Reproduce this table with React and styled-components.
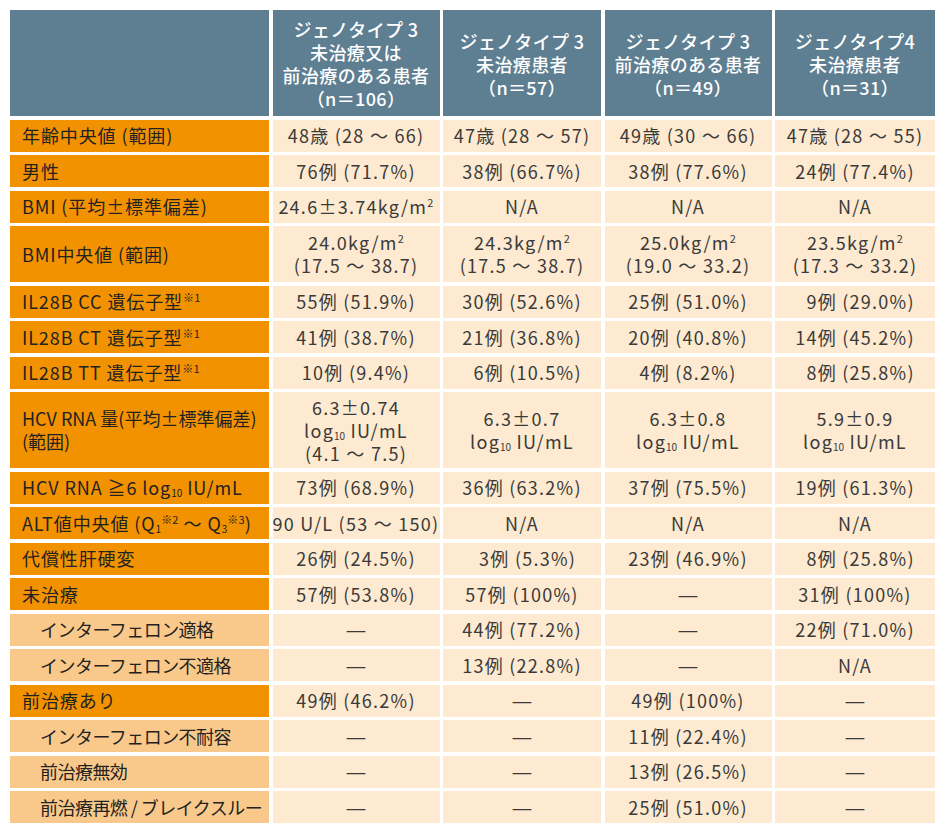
import React from 'react';
import styled, { createGlobalStyle } from 'styled-components';

const GlobalStyle = createGlobalStyle`
  html, body {
    margin: 0;
    padding: 0;
    background: #fff;
  }
  body {
    font-family: "Noto Sans CJK JP", "Noto Sans", sans-serif;
    color: #333;
  }
`;

const Page = styled.div`
  padding: 10px;
  width: 945px;
  box-sizing: border-box;
`;

const Table = styled.div`
  display: grid;
  grid-template-columns: 259px 167px 158px 167px 160px;
  grid-template-rows: ${(p) => p.$rows};
  column-gap: 3.5px;
  row-gap: 3.5px;
  font-size: 18px;
  line-height: 23px;
  letter-spacing: 0.02em;
`;

const Corner = styled.div`
  background: #5e7e91;
`;

const HeadCell = styled.div`
  background: #5e7e91;
  color: #fff;
  font-weight: 500;
  display: flex;
  flex-direction: column;
  align-items: center;
  justify-content: center;
  text-align: center;
  padding-top: 2px;
`;

const LabelCell = styled.div`
  background: ${(p) => (p.$sub ? '#f9c98b' : '#f39200')};
  color: #222;
  display: flex;
  align-items: center;
  padding-left: ${(p) => (p.$sub ? '30px' : '12px')};
  letter-spacing: ${(p) => (p.$sub ? '-0.03em' : p.$tight ? '0' : '0.05em')};
  white-space: nowrap;
  overflow: hidden;
`;

const DataCell = styled.div`
  background: #fdead0;
  color: #3a3a3a;
  display: flex;
  flex-direction: column;
  align-items: center;
  justify-content: center;
  text-align: center;
  white-space: nowrap;
  letter-spacing: 0.07em;
`;

const Line = styled.div`
  display: block;
`;

const Dash = styled.div`
  display: block;
  letter-spacing: 0;
  transform: scaleX(1.3);
`;

const SupText = styled.sup`
  font-size: 11px;
  line-height: 0;
  vertical-align: 7px;
  letter-spacing: 0.02em;
`;

const SubText = styled.sub`
  font-size: 10px;
  line-height: 0;
  vertical-align: -2px;
  letter-spacing: 0;
`;

const FS = '\u2007';

const Sup = ({ children }) => <SupText>{children}</SupText>;
const Sub = ({ children }) => <SubText>{children}</SubText>;

const kgm2 = (v) => (
  <>
    {v}kg/m<Sup>2</Sup>
  </>
);
const log10 = (
  <>
    log<Sub>10</Sub> IU/mL
  </>
);
const DASH = '—';

const headers = [
  ['ジェノタイプ 3', '未治療又は', '前治療のある患者', '（n＝106）'],
  ['ジェノタイプ 3', '未治療患者', '（n＝57）'],
  ['ジェノタイプ 3', '前治療のある患者', '（n＝49）'],
  ['ジェノタイプ4', '未治療患者', '（n＝31）'],
];

const rows = [
  {
    label: '年齢中央値 (範囲)',
    cells: ['48歳 (28 ～ 66)', '47歳 (28 ～ 57)', '49歳 (30 ～ 66)', '47歳 (28 ～ 55)'],
  },
  {
    label: '男性',
    cells: ['76例 (71.7%)', '38例 (66.7%)', '38例 (77.6%)', '24例 (77.4%)'],
  },
  {
    label: 'BMI (平均±標準偏差)',
    cells: [<>24.6±3.74kg/m<Sup>2</Sup></>, 'N/A', 'N/A', 'N/A'],
  },
  {
    label: 'BMI中央値 (範囲)',
    lines: 2,
    cells: [
      [kgm2('24.0'), '(17.5 ～ 38.7)'],
      [kgm2('24.3'), '(17.5 ～ 38.7)'],
      [kgm2('25.0'), '(19.0 ～ 33.2)'],
      [kgm2('23.5'), '(17.3 ～ 33.2)'],
    ],
  },
  {
    label: <>IL28B CC 遺伝子型<Sup>※1</Sup></>,
    cells: ['55例 (51.9%)', '30例 (52.6%)', '25例 (51.0%)', FS + '9例 (29.0%)'],
  },
  {
    label: <>IL28B CT 遺伝子型<Sup>※1</Sup></>,
    cells: ['41例 (38.7%)', '21例 (36.8%)', '20例 (40.8%)', '14例 (45.2%)'],
  },
  {
    label: <>IL28B TT 遺伝子型<Sup>※1</Sup></>,
    cells: ['10例 (9.4%)', FS + '6例 (10.5%)', '4例 (8.2%)', FS + '8例 (25.8%)'],
  },
  {
    label: <>HCV RNA 量(平均±標準偏差)<br />(範囲)</>,
    lines: 3,
    tight: true,
    cells: [
      ['6.3±0.74', log10, '(4.1 ～ 7.5)'],
      ['6.3±0.7', log10],
      ['6.3±0.8', log10],
      ['5.9±0.9', log10],
    ],
  },
  {
    label: <>HCV RNA ≧6 log<Sub>10</Sub> IU/mL</>,
    cells: ['73例 (68.9%)', '36例 (63.2%)', '37例 (75.5%)', '19例 (61.3%)'],
  },
  {
    label: <>ALT値中央値 (Q<Sub>1</Sub><Sup>※2</Sup> ～ Q<Sub>3</Sub><Sup>※3</Sup>)</>,
    cells: ['90 U/L (53 ～ 150)', 'N/A', 'N/A', 'N/A'],
  },
  {
    label: '代償性肝硬変',
    cells: ['26例 (24.5%)', FS + '3例 (5.3%)', '23例 (46.9%)', FS + '8例 (25.8%)'],
  },
  {
    label: '未治療',
    cells: ['57例 (53.8%)', '57例 (100%)', DASH, '31例 (100%)'],
  },
  {
    label: 'インターフェロン適格',
    sub: true,
    cells: [DASH, '44例 (77.2%)', DASH, '22例 (71.0%)'],
  },
  {
    label: 'インターフェロン不適格',
    sub: true,
    cells: [DASH, '13例 (22.8%)', DASH, 'N/A'],
  },
  {
    label: '前治療あり',
    cells: ['49例 (46.2%)', DASH, '49例 (100%)', DASH],
  },
  {
    label: 'インターフェロン不耐容',
    sub: true,
    cells: [DASH, DASH, '11例 (22.4%)', DASH],
  },
  {
    label: '前治療無効',
    sub: true,
    cells: [DASH, DASH, '13例 (26.5%)', DASH],
  },
  {
    label: '前治療再燃 / ブレイクスルー',
    sub: true,
    cells: [DASH, DASH, '25例 (51.0%)', DASH],
  },
];

const heights = { 1: 32, 2: 56, 3: 76 };

export default function App() {
  const template = ['106px', ...rows.map((r) => heights[r.lines || 1] + 'px')].join(' ');
  return (
    <Page>
      <GlobalStyle />
      <Table $rows={template}>
        <Corner />
        {headers.map((h, i) => (
          <HeadCell key={'h' + i}>
            {h.map((line, j) => (
              <Line key={j}>{line}</Line>
            ))}
          </HeadCell>
        ))}
        {rows.map((r, i) => (
          <React.Fragment key={i}>
            <LabelCell $sub={r.sub} $tight={r.tight}>
              <span>{r.label}</span>
            </LabelCell>
            {r.cells.map((c, j) => (
              <DataCell key={j}>
                {Array.isArray(c)
                  ? c.map((line, k) => <Line key={k}>{line}</Line>)
                  : c === DASH
                    ? <Dash>{c}</Dash>
                    : <Line>{c}</Line>}
              </DataCell>
            ))}
          </React.Fragment>
        ))}
      </Table>
    </Page>
  );
}
